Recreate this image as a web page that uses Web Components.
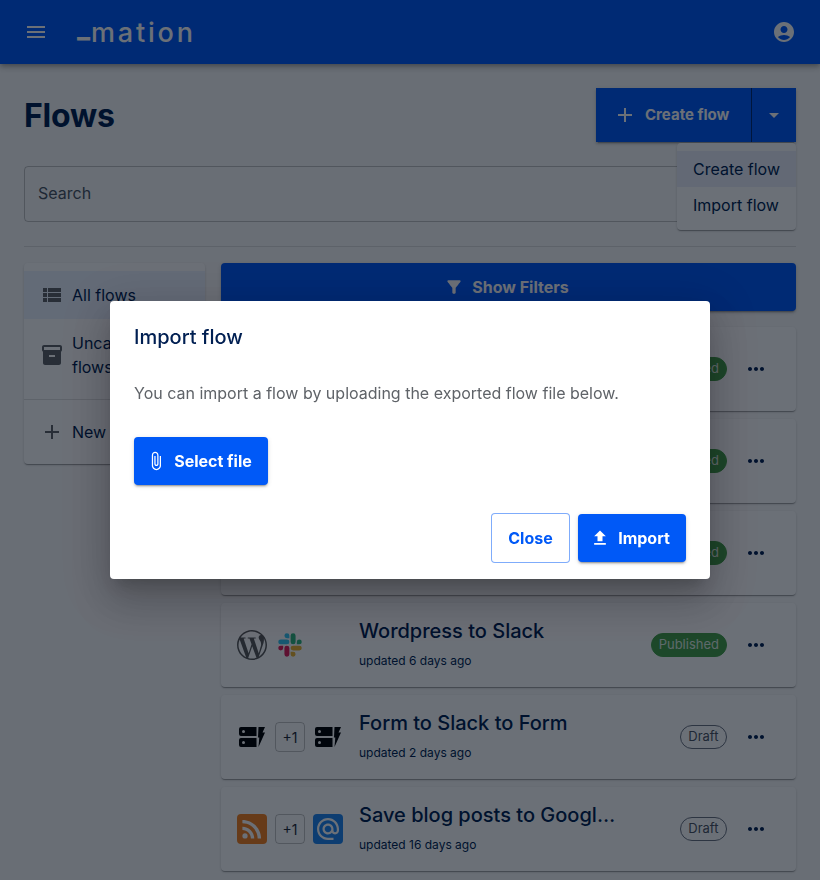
<!DOCTYPE html>
<html lang="en">
<head>
<meta charset="utf-8">
<title>Flows</title>
<style>
    html, body { margin: 0; height: 880px; overflow: hidden; }
    body {
        background: #fafafa;
        color: #001f52;
        font-family: Inter, "Liberation Sans", sans-serif;
    }
</style>
</head>
<body>
<app-bar></app-bar>
<flows-page>
    <split-button slot="action"></split-button>
    <search-field slot="search"></search-field>
    <side-nav slot="nav"></side-nav>

    <flow-card status="published"></flow-card>
    <flow-card status="published"></flow-card>
    <flow-card status="published"></flow-card>
    <flow-card status="published" updated="updated 6 days ago">
        <app-icon slot="first" name="wordpress"></app-icon>
        <app-icon slot="last" name="slack"></app-icon>
        Wordpress to Slack
    </flow-card>
    <flow-card status="draft" updated="updated 2 days ago" extra="+1">
        <app-icon slot="first" name="form"></app-icon>
        <app-icon slot="last" name="form"></app-icon>
        Form to Slack to Form
    </flow-card>
    <flow-card status="draft" updated="updated 16 days ago" extra="+1">
        <app-icon slot="first" name="rss"></app-icon>
        <app-icon slot="last" name="email"></app-icon>
        Save blog posts to Google Sheets
    </flow-card>
</flows-page>
<import-dialog></import-dialog>

<script>
const ICONS = {
    menu: 'M3 18h18v-2H3v2zm0-5h18v-2H3v2zm0-7v2h18V6H3z',
    account: 'M12 2C6.48 2 2 6.48 2 12s4.48 10 10 10 10-4.48 10-10S17.52 2 12 2zm0 4c1.93 0 3.5 1.57 3.5 3.5S13.93 13 12 13s-3.5-1.57-3.5-3.5S10.07 6 12 6zm0 14c-2.03 0-4.43-.82-6.14-2.88C7.55 15.8 9.68 15 12 15s4.45.8 6.14 2.12C16.43 19.18 14.03 20 12 20z',
    add: 'M19 13h-6v6h-2v-6H5v-2h6V5h2v6h6v2z',
    dropdown: 'M7 10l5 5 5-5z',
    list: 'M3 14h4v-4H3v4zm0 5h4v-4H3v4zM3 9h4V5H3v4zm5 5h13v-4H8v4zm0 5h13v-4H8v4zM8 5v4h13V5H8z',
    archive: 'M20 2H4c-1 0-2 .9-2 2v3.01c0 .72.43 1.34 1 1.69V20c0 1.1 1.1 2 2 2h14c.9 0 2-.9 2-2V8.7c.57-.35 1-.97 1-1.69V4c0-1.1-1-2-2-2zm-5 12H9v-2h6v2zm5-7H4V4l16-.02V7z',
    filter: 'M4.25 5.61C6.27 8.2 10 13 10 13v6c0 .55.45 1 1 1h2c.55 0 1-.45 1-1v-6s3.72-4.8 5.74-7.39c.51-.66.04-1.61-.79-1.61H5.04c-.83 0-1.3.95-.79 1.61z',
    attach: 'M16.5 6v11.5c0 2.21-1.79 4-4 4s-4-1.79-4-4V5c0-1.38 1.12-2.5 2.5-2.5s2.5 1.12 2.5 2.5v10.5c0 .55-.45 1-1 1s-1-.45-1-1V6H10v9.5c0 1.38 1.12 2.5 2.5 2.5s2.5-1.12 2.5-2.5V5c0-2.21-1.79-4-4-4S7 2.79 7 5v12.5c0 3.04 2.46 5.5 5.5 5.5s5.5-2.46 5.5-5.5V6h-1.5z',
    upload: 'M9 16h6v-6h4l-7-7-7 7h4zm-4 2h14v2H5z',
    more: 'M6 10c-1.1 0-2 .9-2 2s.9 2 2 2 2-.9 2-2-.9-2-2-2zm12 0c-1.1 0-2 .9-2 2s.9 2 2 2 2-.9 2-2-.9-2-2-2zm-6 0c-1.1 0-2 .9-2 2s.9 2 2 2 2-.9 2-2-.9-2-2-2z'
};

function icon(name, size) {
    return `<svg width="${size}" height="${size}" viewBox="0 0 24 24" fill="currentColor" aria-hidden="true"><path d="${ICONS[name]}"/></svg>`;
}

const APP_ICONS = {
    wordpress: `<svg width="30" height="30" viewBox="0 0 24 24" fill="#5a5a5a"><path d="M21.469 6.825c.84 1.537 1.318 3.3 1.318 5.175 0 3.979-2.156 7.456-5.363 9.325l3.295-9.527c.615-1.54.82-2.771.82-3.864 0-.405-.026-.78-.07-1.11m-7.981.105c.647-.03 1.232-.105 1.232-.105.582-.075.514-.93-.067-.899 0 0-1.755.135-2.88.135-1.064 0-2.85-.15-2.85-.15-.585-.03-.661.855-.075.885 0 0 .54.061 1.125.09l1.68 4.605-2.37 7.08L5.354 6.9c.649-.03 1.234-.1 1.234-.1.585-.075.516-.93-.065-.896 0 0-1.746.138-2.874.138-.2 0-.438-.008-.69-.015C4.911 3.15 8.235 1.215 12 1.215c2.809 0 5.365 1.072 7.286 2.833-.046-.003-.091-.009-.141-.009-1.06 0-1.812.923-1.812 1.914 0 .89.513 1.643 1.06 2.531.411.72.89 1.643.89 2.977 0 .915-.354 1.994-.821 3.479l-1.075 3.585-3.9-11.61.001.014zM12 22.784c-1.059 0-2.081-.153-3.048-.437l3.237-9.406 3.315 9.087c.024.053.05.101.078.149-1.12.393-2.325.609-3.582.609M1.211 12c0-1.564.336-3.05.935-4.39L7.29 21.709C3.694 19.96 1.212 16.271 1.211 12M12 0C5.385 0 0 5.385 0 12s5.385 12 12 12 12-5.385 12-12S18.615 0 12 0"/></svg>`,
    slack: `<svg width="30" height="30" viewBox="-3.3 -3.3 30.6 30.6">
        <path fill="#e01e5a" d="M5.042 15.165a2.528 2.528 0 0 1-2.52 2.523A2.528 2.528 0 0 1 0 15.165a2.527 2.527 0 0 1 2.522-2.52h2.52v2.52zM6.313 15.165a2.527 2.527 0 0 1 2.521-2.52 2.527 2.527 0 0 1 2.521 2.52v6.313A2.528 2.528 0 0 1 8.834 24a2.528 2.528 0 0 1-2.521-2.522v-6.313z"/>
        <path fill="#36c5f0" d="M8.834 5.042a2.528 2.528 0 0 1-2.521-2.52A2.528 2.528 0 0 1 8.834 0a2.528 2.528 0 0 1 2.521 2.522v2.52H8.834zM8.834 6.313a2.528 2.528 0 0 1 2.521 2.521 2.528 2.528 0 0 1-2.521 2.521H2.522A2.528 2.528 0 0 1 0 8.834a2.528 2.528 0 0 1 2.522-2.521h6.312z"/>
        <path fill="#2eb67d" d="M18.956 8.834a2.528 2.528 0 0 1 2.522-2.521A2.528 2.528 0 0 1 24 8.834a2.528 2.528 0 0 1-2.522 2.521h-2.522V8.834zM17.688 8.834a2.528 2.528 0 0 1-2.523 2.521 2.527 2.527 0 0 1-2.52-2.521V2.522A2.527 2.527 0 0 1 15.165 0a2.528 2.528 0 0 1 2.523 2.522v6.312z"/>
        <path fill="#ecb22e" d="M15.165 18.956a2.528 2.528 0 0 1 2.523 2.522A2.528 2.528 0 0 1 15.165 24a2.527 2.527 0 0 1-2.52-2.522v-2.522h2.52zM15.165 17.688a2.527 2.527 0 0 1-2.52-2.523 2.526 2.526 0 0 1 2.52-2.52h6.313A2.527 2.527 0 0 1 24 15.165a2.528 2.528 0 0 1-2.522 2.523h-6.313z"/>
    </svg>`,
    form: `<svg width="30" height="30" viewBox="0 0 30 30" fill="#000">
        <path fill-rule="evenodd" d="M4 5h15.500v9H4a2 2 0 0 1-2-2V7a2 2 0 0 1 2-2zm2.500 3a1.500 1.500 0 1 0 0 3 1.500 1.500 0 0 0 0-3z"/>
        <path fill-rule="evenodd" d="M4 16h15.500v9H4a2 2 0 0 1-2-2v-5a2 2 0 0 1 2-2zm2.500 3a1.500 1.500 0 1 0 0 3 1.500 1.500 0 0 0 0-3z"/>
        <path d="M21.500 5H28l-2.500 5.500H28L21.500 25l.8-9.500H21z"/>
    </svg>`,
    rss: `<svg width="30" height="30" viewBox="0 0 30 30"><rect width="30" height="30" rx="4" fill="#f58220"/>
        <g transform="translate(.6 .6) scale(1.2)" fill="#fff"><circle cx="6.180" cy="17.820" r="2.180"/><path d="M4 4.440v2.830c7.030 0 12.730 5.700 12.730 12.730h2.830c0-8.590-6.970-15.560-15.560-15.560zm0 5.660v2.830c3.900 0 7.070 3.170 7.070 7.070h2.830c0-5.470-4.430-9.900-9.900-9.900z"/></g></svg>`,
    email: `<svg width="30" height="30" viewBox="0 0 30 30"><rect width="30" height="30" rx="4" fill="#1f87f0"/>
        <path transform="translate(1.800 1.800) scale(1.100)" fill="#fff" d="M12 1.950c-5.520 0-10 4.480-10 10s4.480 10 10 10h5v-2h-5c-4.340 0-8-3.660-8-8s3.660-8 8-8 8 3.660 8 8v1.430c0 .79-.71 1.570-1.500 1.570s-1.500-.78-1.500-1.570v-1.430c0-2.760-2.240-5-5-5s-5 2.240-5 5 2.240 5 5 5c1.380 0 2.640-.56 3.540-1.470.65.89 1.770 1.470 2.960 1.470 1.970 0 3.500-1.600 3.500-3.570v-1.430c0-5.520-4.480-10-10-10zm0 13c-1.660 0-3-1.340-3-3s1.340-3 3-3 3 1.340 3 3-1.340 3-3 3z"/></svg>`
};

class AppBar extends HTMLElement {
    constructor() {
        super();
        this.attachShadow({ mode: 'open' });
        this.shadowRoot.innerHTML = `
            <style>
                :host {
                    display: flex;
                    align-items: center;
                    justify-content: space-between;
                    height: 64px;
                    padding: 0 24px;
                    background: #0059f7;
                    color: #fff;
                    box-shadow: 0 2px 4px -1px rgba(0,0,0,.2), 0 4px 5px rgba(0,0,0,.14), 0 1px 10px rgba(0,0,0,.12);
                    position: relative;
                    z-index: 1;
                }
                .left { display: flex; align-items: center; gap: 29px; }
                svg { display: block; }
                .logo {
                    font-size: 27px;
                    font-weight: 500;
                    line-height: 32px;
                    letter-spacing: 2.8px;
                    white-space: nowrap;
                    padding-bottom: 4px;
                }
                .logo span { font-weight: 800; letter-spacing: 0; vertical-align: 5px; margin-right: 1px; }
            </style>
            <div class="left">${icon('menu', 24)}<div class="logo"><span>_</span>mation</div></div>
            ${icon('account', 24)}
        `;
    }
}

class FlowsPage extends HTMLElement {
    constructor() {
        super();
        this.attachShadow({ mode: 'open' });
        this.shadowRoot.innerHTML = `
            <style>
                :host { display: block; padding: 24px; }
                .head { display: flex; align-items: center; justify-content: space-between; margin-bottom: 24px; }
                h1 { margin: 0; padding-top: 2px; font-size: 32px; line-height: 1.2; font-weight: 700; letter-spacing: -.2px; }
                hr { border: 0; border-top: 1px solid rgba(194,194,194,.5); margin: 24px 0 16px; }
                .body { display: grid; grid-template-columns: 181px 1fr; gap: 16px; align-items: start; }
                .cards { display: flex; flex-direction: column; gap: 8px; }
                .filters {
                    display: flex; align-items: center; justify-content: center; gap: 8px; padding-right: 4px;
                    height: 48px; margin-bottom: 8px; border-radius: 4px;
                    background: #0059f7; color: #fff;
                    font-size: 16px; font-weight: 700;
                    box-shadow: 0 3px 1px -2px rgba(0,0,0,.2), 0 2px 2px rgba(0,0,0,.14), 0 1px 5px rgba(0,0,0,.12);
                }
                svg { display: block; }
            </style>
            <div class="head"><h1>Flows</h1><slot name="action"></slot></div>
            <slot name="search"></slot>
            <hr>
            <div class="body">
                <slot name="nav"></slot>
                <div class="cards">
                    <div class="filters">${icon('filter', 20)}Show Filters</div>
                    <slot></slot>
                </div>
            </div>
        `;
    }
}

class SplitButton extends HTMLElement {
    constructor() {
        super();
        this.attachShadow({ mode: 'open' });
        this.shadowRoot.innerHTML = `
            <style>
                :host { display: block; position: relative; z-index: 2; }
                .group {
                    display: flex; height: 54px; background: #0059f7; color: #fff;
                    box-shadow: 0 3px 1px -2px rgba(0,0,0,.2), 0 2px 2px rgba(0,0,0,.14), 0 1px 5px rgba(0,0,0,.12);
                }
                .main {
                    display: flex; align-items: center; gap: 8px; width: 156px; box-sizing: border-box;
                    padding-left: 17px; border-right: 1px solid #002a73;
                    font-size: 15px; font-weight: 700;
                }
                .main span { padding-bottom: 1px; }
                .arrow { width: 44px; display: flex; align-items: center; justify-content: center; }
                svg { display: block; }
                .menu {
                    position: absolute; top: 55px; right: 0; width: 119px; box-sizing: border-box;
                    padding: 8px 0 7px; background: #fff; border-radius: 4px; color: #001f52;
                    box-shadow: 0 2px 1px -1px rgba(0,0,0,.2), 0 1px 1px rgba(0,0,0,.14), 0 1px 3px rgba(0,0,0,.12);
                }
                .menu div { height: 36px; line-height: 36px; padding-left: 16px; font-size: 16px; }
                .menu div.on { background: rgba(20,50,200,.08); }
            </style>
            <div class="group">
                <div class="main">${icon('add', 24)}<span>Create flow</span></div>
                <div class="arrow">${icon('dropdown', 24)}</div>
            </div>
            <div class="menu"><div class="on">Create flow</div><div>Import flow</div></div>
        `;
    }
}

class SearchField extends HTMLElement {
    constructor() {
        super();
        this.attachShadow({ mode: 'open' });
        this.shadowRoot.innerHTML = `
            <style>
                :host {
                    display: flex; align-items: center; height: 52px; padding: 0 13px 2px;
                    border: 1px solid rgba(0,0,0,.23); border-radius: 4px;
                    font-size: 16px; color: #4b5563;
                }
            </style>
            Search
        `;
    }
}

class SideNav extends HTMLElement {
    constructor() {
        super();
        this.attachShadow({ mode: 'open' });
        this.shadowRoot.innerHTML = `
            <style>
                :host {
                    display: block; padding: 8px 0; background: #fff; border-radius: 4px; font-size: 16px; line-height: 24px;
                    box-shadow: 0 2px 1px -1px rgba(0,0,0,.2), 0 1px 1px rgba(0,0,0,.14), 0 1px 3px rgba(0,0,0,.12);
                }
                .row { display: flex; align-items: center; gap: 8px; padding: 12px 16px; min-height: 24px; }
                .row.tall { padding: 12px 16px 20px; }
                .row.on { background: rgba(0,89,247,.08); }
                svg { display: block; flex: none; color: #5f6368; }
                .sep { border-top: 1px solid rgba(194,194,194,.5); margin-bottom: 8px; }
            </style>
            <div class="row on">${icon('list', 24)}All flows</div>
            <div class="row tall">${icon('archive', 24)}<span>Uncategorized flows</span></div>
            <div class="sep"></div>
            <div class="row new">${icon('add', 24)}New folder</div>
        `;
    }
}

class AppIcon extends HTMLElement {
    connectedCallback() {
        if (this.shadowRoot) return;
        this.attachShadow({ mode: 'open' });
        this.shadowRoot.innerHTML = `
            <style>:host { display: block; width: 30px; height: 30px; } svg { display: block; }</style>
            ${APP_ICONS[this.getAttribute('name')]}
        `;
    }
}

class StatusChip extends HTMLElement {
    connectedCallback() {
        if (this.shadowRoot) return;
        this.attachShadow({ mode: 'open' });
        const published = this.getAttribute('status') === 'published';
        this.shadowRoot.innerHTML = `
            <style>
                :host {
                    display: inline-flex; align-items: center; box-sizing: border-box; height: 24px; padding-bottom: 2px;
                    border-radius: 12px; font-size: 13px;
                    ${published ? 'padding-left: 7px; padding-right: 7px; background: #45a049; color: rgba(255,255,255,.85); border: 1px solid #45a049;'
                                : 'padding-left: 7.5px; padding-right: 7.5px; color: #4b5563; border: 1px solid #6b7280;'}
                }
            </style>
            ${published ? 'Published' : 'Draft'}
        `;
    }
}

class FlowCard extends HTMLElement {
    connectedCallback() {
        if (this.shadowRoot) return;
        this.attachShadow({ mode: 'open' });
        const extra = this.getAttribute('extra');
        const updated = this.getAttribute('updated') || '';
        this.shadowRoot.innerHTML = `
            <style>
                :host {
                    display: flex; align-items: center; height: 84px; box-sizing: border-box; padding: 0 16px;
                    background: #fff; border-radius: 4px;
                    box-shadow: 0 2px 1px -1px rgba(0,0,0,.2), 0 1px 1px rgba(0,0,0,.14), 0 1px 3px rgba(0,0,0,.12);
                }
                .apps { display: flex; align-items: center; gap: 8px; width: 122px; flex: none; }
                .extra {
                    width: 30px; height: 30px; box-sizing: border-box; display: flex; align-items: center; justify-content: center;
                    border: 1px solid rgba(0,0,0,.23); border-radius: 4px; font-size: 14px; color: #1f2937;
                }
                .text { flex: none; width: 262px; min-width: 0; padding-bottom: 2px; }
                .title {
                    font-size: 20px; line-height: 28px; font-weight: 500;
                    white-space: nowrap; overflow: hidden; text-overflow: ellipsis;
                }
                .updated { font-size: 12px; line-height: 20px; margin-top: 6px; }
                .status { flex: 1; display: flex; justify-content: flex-end; }
                .more { margin-left: 17px; margin-right: 12px; }
                svg { display: block; }
            </style>
            <div class="apps">
                <slot name="first"></slot>
                ${extra ? `<div class="extra">${extra}</div>` : ''}
                <slot name="last"></slot>
            </div>
            <div class="text">
                <div class="title"><slot></slot></div>
                <div class="updated">${updated}</div>
            </div>
            <div class="status"><status-chip status="${this.getAttribute('status')}"></status-chip></div>
            <div class="more">${icon('more', 24)}</div>
        `;
    }
}

class ImportDialog extends HTMLElement {
    constructor() {
        super();
        this.attachShadow({ mode: 'open' });
        this.shadowRoot.innerHTML = `
            <style>
                :host {
                    position: fixed; inset: 0; z-index: 10;
                    display: flex; align-items: center; justify-content: center;
                    background: rgba(0,8,20,.58);
                }
                .box {
                    width: 600px; height: 278px; box-sizing: border-box; padding: 20px 24px 16px;
                    background: #fff; border-radius: 4px; display: flex; flex-direction: column;
                    box-shadow: 0 11px 15px -7px rgba(0,0,0,.2), 0 24px 38px 3px rgba(0,0,0,.14), 0 9px 46px 8px rgba(0,0,0,.12);
                }
                h2 { margin: 0 0 28px; font-size: 20px; line-height: 32px; font-weight: 500; color: #001f52; }
                p { margin: 0 0 32px; font-size: 16px; line-height: 24px; color: #5f6368; }
                .btn {
                    display: inline-flex; align-items: center; justify-content: center; box-sizing: border-box;
                    height: 48px; border-radius: 4px; font-size: 16px; font-weight: 700; gap: 8px;
                    background: #0059f7; color: #fff;
                    box-shadow: 0 3px 1px -2px rgba(0,0,0,.2), 0 2px 2px rgba(0,0,0,.14), 0 1px 5px rgba(0,0,0,.12);
                }
                .select { width: 134px; align-self: flex-start; padding-right: 4px; }
                .actions { margin-top: auto; display: flex; justify-content: flex-end; align-items: center; gap: 8px; }
                .close { width: 79px; height: 50px; background: #fff; color: #0059f7; border: 1px solid rgba(0,89,247,.5); box-shadow: none; }
                .import { width: 108px; padding-right: 4px; }
                svg { display: block; }
            </style>
            <div class="box" role="dialog">
                <h2>Import flow</h2>
                <p>You can import a flow by uploading the exported flow file below.</p>
                <div class="btn select">${icon('attach', 20)}Select file</div>
                <div class="actions">
                    <div class="btn close">Close</div>
                    <div class="btn import">${icon('upload', 20)}Import</div>
                </div>
            </div>
        `;
    }
}

customElements.define('app-bar', AppBar);
customElements.define('flows-page', FlowsPage);
customElements.define('split-button', SplitButton);
customElements.define('search-field', SearchField);
customElements.define('side-nav', SideNav);
customElements.define('app-icon', AppIcon);
customElements.define('status-chip', StatusChip);
customElements.define('flow-card', FlowCard);
customElements.define('import-dialog', ImportDialog);
</script>
</body>
</html>
